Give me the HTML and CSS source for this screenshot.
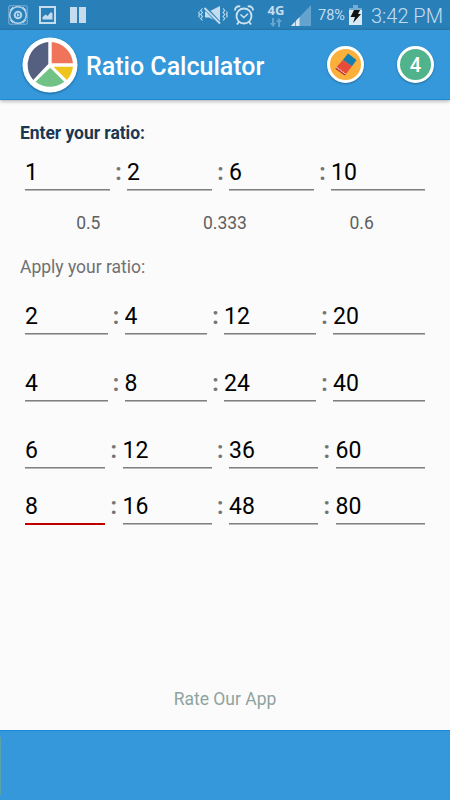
FILE: index.html
```html
<!DOCTYPE html>
<html lang="en">
<head>
    <meta charset="utf-8">
    <title>Ratio Calculator</title>
    <meta name="viewport" content="width=device-width, initial-scale=1.0">
    <link rel="stylesheet" href="styles.css">
</head>
<body>
    <div class="status-bar">
        <svg class="icon-disc" width="20" height="20" viewBox="0 0 20 20" fill="none" stroke="#b5d3e8">
            <rect x=".8" y=".8" width="18.4" height="18.4" rx="1" stroke-width="1" stroke-opacity=".6"/>
            <circle cx="10" cy="10" r="8.3" stroke-width="1.5"/>
            <circle cx="10" cy="10" r="3.3" stroke-width="2"/>
            <path d="M9 8l3 2-3 2z" fill="#b5d3e8" stroke="none"/>
            <path d="M2 5l3-3M15 2l3 3M2 15l3 3M15 18l3-3" stroke-width="1"/>
        </svg>
        <svg class="icon-image" width="17" height="18" viewBox="0 0 17 18">
            <rect x="1" y="1" width="15" height="16" fill="none" stroke="#c4dced" stroke-width="2"/>
            <path d="M3.5 13.5v-2.3l3-2.7 2 1.5 3.5-4 1.5 1.5v6z" fill="#c4dced"/>
        </svg>
        <svg class="icon-pause" width="16" height="16" viewBox="0 0 16 16" fill="#c4dced">
            <rect width="7" height="16"/>
            <rect x="9" width="7" height="16"/>
        </svg>
        <span class="spacer"></span>
        <svg class="icon-mute" width="30" height="20" viewBox="0 0 30 20" fill="none" stroke="#c4dced">
            <path d="M7 6.5h4L22 1v17L11 12.5H7z" fill="#c4dced" stroke="none"/>
            <path d="M6 1.5L22 19" stroke="#2980b9" stroke-width="4"/>
            <path d="M6.5 3L22 18.5" stroke-width="2"/>
            <path d="M4.5 3.5l-1.8 2 1.8 2-1.8 2 1.8 2-1.8 2 1.8 2M1.5 6.5L.7 8l.8 1.5-.8 1.5.8 1.5M25 3.5l1.8 2-1.8 2 1.8 2-1.8 2 1.8 2-1.8 2M28.5 6.5l.8 1.5-.8 1.5.8 1.5-.8 1.5" stroke-width="1.1"/>
        </svg>
        <svg class="icon-alarm" width="20" height="21" viewBox="0 0 20 21" fill="none" stroke="#d0e3f0">
            <circle cx="10" cy="11" r="7.5" stroke-width="1.8"/>
            <path d="M1 5.5A4 4 0 0 1 6.3 1.5M19 5.5A4 4 0 0 0 13.7 1.5M4.8 17L3 19.5M15.2 17l1.8 2.5" stroke-width="1.8"/>
            <path d="M6.5 9.5l3.3 3 4.2-3.7" stroke-width="1.5"/>
        </svg>
        <div class="network">
            <span>4G</span>
            <svg width="12" height="9" viewBox="0 0 12 9" fill="#66a6cf">
                <path d="M2 0h2v5h2L3 9 0 5h2zM8 9h2V4h2L9 0 6 4h2z"/>
            </svg>
        </div>
        <svg class="icon-signal" width="20" height="21" viewBox="0 0 20 21">
            <path d="M0 21L20 0v21z" fill="#63a3ce"/>
            <path d="M0 21l4-4.2V21zM5 21v-5.2l3.5-3.7V21z" fill="#d8e9f5"/>
        </svg>
        <span class="battery-level">78%</span>
        <svg class="icon-battery" width="13" height="20" viewBox="0 0 13 20">
            <path d="M4 0h5v3h4v3H0V3h4z" fill="#75add3"/>
            <path d="M0 5h13v15H0z" fill="#d8e9f5"/>
            <path d="M5 5h6L9 9h3l-8 9 2-6H1.5z" fill="#111"/>
        </svg>
        <span class="clock">3:42 PM</span>
    </div>

    <header class="app-bar">
        <svg class="logo" width="56" height="56" viewBox="0 0 56 56">
            <circle cx="28" cy="28" r="27.5" fill="#fff"/>
            <path d="M26.3 5.1V27L11.2 43A23 23 0 0 1 26.3 5.1z" fill="#556080"/>
            <path d="M29.7 5.1A23 23 0 0 1 50.9 26.3H29.7z" fill="#ef7459"/>
            <path d="M31.5 29.7h19.4a23 23 0 0 1-6 13.3z" fill="#efc41a"/>
            <path d="M28.2 30.7L42.3 44.8a23 23 0 0 1-28.8 0z" fill="#71c285"/>
        </svg>
        <h1>Ratio Calculator</h1>
        <button class="round-button clear" aria-label="Clear">
            <svg width="22" height="23" viewBox="0 0 24 25">
                <path d="M8.5 7.5L14.3 .5 23.5 7.5 18.5 14.5z" fill="#147eb0"/>
                <path d="M8.5 7.5l10 7-7.5 9.8L.5 16.5z" fill="#e64c3c"/>
                <path d="M1.6 15.8l10 7.2" stroke="#fff" stroke-width="1.1" stroke-dasharray="1.3 .8"/>
                <path d="M.8 16.8l10.2 7.2" stroke="#b83225" stroke-width="1.2"/>
            </svg>
        </button>
        <button class="round-button count">4</button>
    </header>

    <main>
        <h2>Enter your ratio:</h2>
        <div class="ratio-row source">
            <input value="1"><b>:</b><input value="2"><b>:</b><input value="6"><b>:</b><input value="10">
        </div>
        <div class="quotients">
            <span>0.5</span>
            <span>0.333</span>
            <span>0.6</span>
        </div>

        <p class="apply-label">Apply your ratio:</p>
        <div class="ratio-row medium">
            <input value="2"><b>:</b><input value="4"><b>:</b><input value="12"><b>:</b><input value="20">
        </div>
        <div class="ratio-row medium">
            <input value="4"><b>:</b><input value="8"><b>:</b><input value="24"><b>:</b><input value="40">
        </div>
        <div class="ratio-row wide">
            <input value="6"><b>:</b><input value="12"><b>:</b><input value="36"><b>:</b><input value="60">
        </div>
        <div class="ratio-row wide last">
            <input class="active" value="8"><b>:</b><input value="16"><b>:</b><input value="48"><b>:</b><input value="80">
        </div>

        <a class="rate">Rate Our App</a>
    </main>

    <footer class="banner"></footer>
</body>
</html>
```

FILE: styles.css
```css
* {
    box-sizing: border-box;
}

body {
    margin: 0;
    height: 800px;
    display: flex;
    flex-direction: column;
    overflow: hidden;
    font-family: Roboto, sans-serif;
    background-color: #fbfbfb;
    color: #000;
}

svg {
    display: block;
    flex: none;
}

/* status bar */
.status-bar {
    height: 30px;
    flex: none;
    display: flex;
    align-items: center;
    padding: 0 8px;
    background-color: #2980b9;
    color: #c4dced;
}

.icon-image {
    margin-left: 11px;
}

.icon-pause {
    margin-left: 14px;
}

.spacer {
    flex: 1;
}

.icon-alarm {
    margin-left: 6px;
}

.network {
    width: 18px;
    height: 23px;
    margin-left: 13px;
    display: flex;
    flex-direction: column;
    align-items: center;
    justify-content: space-between;
    font-family: "Open Sans", sans-serif;
    font-size: 13px;
    font-weight: bold;
    line-height: 12px;
}

.icon-signal {
    margin-left: 6px;
}

.battery-level {
    width: 27px;
    margin-left: 7px;
    font-size: 14.5px;
}

.icon-battery {
    margin-left: 4px;
}

.clock {
    width: 71px;
    margin: 2px 0 0 9px;
    font-size: 20px;
    font-weight: 300;
    white-space: nowrap;
}

/* app bar */
.app-bar {
    height: 70px;
    flex: none;
    display: flex;
    align-items: center;
    padding: 0 16px 0 22px;
    background-color: #3498db;
    border-bottom: 1px solid #188bd6;
    box-shadow: 0 1px 4px rgba(0, 0, 0, 0.35);
    color: #fff;
}

.logo {
    border-radius: 50%;
    box-shadow: 0 1px 2px rgba(0, 0, 0, 0.3);
}

h1 {
    flex: 1;
    margin: 3px 0 0 8px;
    font-size: 25px;
    font-weight: 500;
}

.round-button {
    width: 37px;
    height: 37px;
    padding: 0;
    display: flex;
    align-items: center;
    justify-content: center;
    border: 3px solid #fff;
    border-radius: 50%;
    box-shadow: 0 1px 2px rgba(0, 0, 0, 0.3);
    font-family: inherit;
    font-size: 20px;
    font-weight: 500;
    color: #fff;
}

.clear {
    background-color: #fbb03b;
}

.count {
    margin-left: 33px;
    background-color: #51b38b;
}

/* content */
main {
    flex: 1;
    display: flex;
    flex-direction: column;
    padding: 22px 20px 0;
}

h2 {
    margin: 0;
    font-size: 17.5px;
    line-height: 22px;
    font-weight: bold;
    letter-spacing: -0.05px;
    color: #1a3752;
}

.ratio-row {
    height: 34px;
    display: grid;
    padding: 0 5px;
    margin-bottom: 33px;
}

.ratio-row input {
    width: 100%;
    min-width: 0;
    height: 34px;
    padding: 0 0 1px;
    border: 0;
    border-bottom: 1px solid #808080;
    border-radius: 0;
    box-shadow: 0 1px #b8b8b8;
    outline: none;
    background: none;
    font-family: inherit;
    font-size: 23px;
    color: #000;
}

.ratio-row .active {
    height: 35px;
    border-bottom: 2px solid #c00000;
    box-shadow: none;
}

.ratio-row b {
    font-size: 23px;
    line-height: 33px;
    text-align: center;
    color: #757575;
}

.source {
    grid-template-columns: 85px 17px 85px 17px 85px 17px 94px;
    margin: 12px 0 0;
}

.medium {
    grid-template-columns: 82.5px 17px 82.5px 17px 92px 17px 92px;
}

.wide {
    grid-template-columns: 80px 17.5px 89px 17.5px 89px 17.5px 89.5px;
}

.wide + .last {
    margin: -11px 0 0;
}

.quotients {
    display: grid;
    grid-template-columns: repeat(3, 1fr);
    margin-top: 22px;
    font-size: 17.5px;
    line-height: 22px;
    text-align: center;
    color: #606060;
}

.apply-label {
    margin: 22px 0;
    font-size: 17.5px;
    line-height: 22px;
    color: #707070;
}

.rate {
    margin: auto auto 20px;
    font-size: 17.5px;
    line-height: 22px;
    color: #8fa39f;
}

.banner {
    height: 70px;
    flex: none;
    padding-top: 6px;
    background-color: #3498db;
    border-top: 1px solid #188bd6;
}

.banner::before {
    content: "";
    display: block;
    width: 1px;
    height: 58px;
    background-color: #5ba3a8;
}
```
